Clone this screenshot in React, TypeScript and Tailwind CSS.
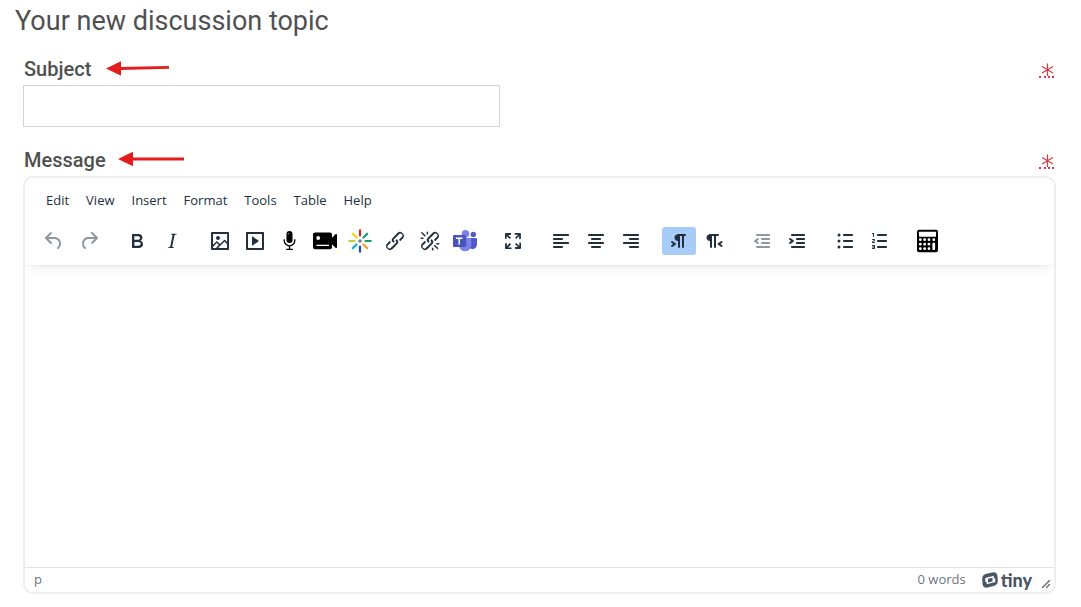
import React from "react";

const paths = {
  undo: "M6.4 8H12c3.7 0 6.2 2 6.8 5.1.6 2.7-.4 5.6-2.3 6.8a1 1 0 0 1-1-1.8c1.1-.6 1.8-2.7 1.4-4.6-.5-2.1-2.1-3.5-4.9-3.5H6.4l3.3 3.3a1 1 0 1 1-1.4 1.4l-5-5a1 1 0 0 1 0-1.4l5-5a1 1 0 0 1 1.4 1.4L6.4 8Z",
  redo: "M17.6 10H12c-2.8 0-4.4 1.4-4.9 3.5-.4 2 .3 4 1.4 4.6a1 1 0 1 1-1 1.8c-2-1.2-2.9-4.1-2.3-6.8.6-3 3-5.1 6.8-5.1h5.6l-3.3-3.3a1 1 0 1 1 1.4-1.4l5 5a1 1 0 0 1 0 1.4l-5 5a1 1 0 0 1-1.4-1.4l3.3-3.3Z",
  bold: "M7.8 19c-.3 0-.5 0-.6-.2l-.2-.5V5.7c0-.2 0-.4.2-.5l.6-.2h5c1.5 0 2.7.3 3.5 1 .7.6 1.1 1.4 1.1 2.5a3 3 0 0 1-.6 1.9c-.4.6-1 1-1.6 1.2.4.1.9.3 1.3.6s.8.7 1 1.2c.4.4.5 1 .5 1.6 0 1.3-.4 2.3-1.3 3-.8.7-2.1 1-3.8 1H7.8Zm5-8.3c.6 0 1.2-.1 1.6-.5.4-.3.6-.7.6-1.3 0-1.1-.8-1.7-2.3-1.7H9.3v3.5h3.4Zm.5 6c.7 0 1.3-.1 1.7-.4.4-.4.6-.9.6-1.5s-.2-1-.7-1.4c-.4-.3-1-.4-2-.4H9.4v3.8h4Z",
  italic: "m16.7 4.7-.1.9h-.3c-.6 0-1 0-1.4.3-.3.3-.4.6-.5 1.1l-2.1 9.8v.6c0 .5.4.8 1.4.8h.2l-.2.8H8l.2-.8h.2c1.1 0 1.8-.5 2-1.5l2-9.8.1-.5c0-.6-.4-.8-1.4-.8h-.3l.2-.9h5.8Z",
  image: "m5 15.7 3.3-3.2c.3-.3.7-.3 1 0L12 15l4.1-4c.3-.4.8-.4 1 0l2 1.9V5H5v10.7ZM5 18V19h3l2.8-2.9-2-2L5 17.9Zm14-3-2.5-2.4-6.4 6.5H19v-4ZM4 3h16c.6 0 1 .4 1 1v16c0 .6-.4 1-1 1H4a1 1 0 0 1-1-1V4c0-.6.4-1 1-1Zm6 8a2 2 0 1 0 0-4 2 2 0 0 0 0 4Z",
  media: "M4 3h16c.6 0 1 .4 1 1v16c0 .6-.4 1-1 1H4a1 1 0 0 1-1-1V4c0-.6.4-1 1-1Zm1 2v14h14V5H5Zm4.8 2.6 5.6 4a.5.5 0 0 1 0 .8l-5.6 4A.5.5 0 0 1 9 16V8a.5.5 0 0 1 .8-.4Z",
  link: "M6.2 12.3a1 1 0 0 1 1.4 1.4l-2 2a2 2 0 1 0 2.6 2.8l4.8-4.8a1 1 0 0 0 0-1.4 1 1 0 1 1 1.4-1.3 2.9 2.9 0 0 1 0 4L9.6 20a3.9 3.9 0 0 1-5.5-5.5l2-2Zm11.6-.6a1 1 0 0 1-1.4-1.4l2-2a2 2 0 1 0-2.6-2.8L11 10.3a1 1 0 0 0 0 1.4A1 1 0 1 1 9.6 13a2.9 2.9 0 0 1 0-4L14.4 4a3.9 3.9 0 0 1 5.5 5.5l-2 2Z",
  unlinkRays: "M7.6 6.3a.8.8 0 0 1-1 1.1L3.3 4.2a.7.7 0 1 1 1-1l3.2 3.1ZM5.1 8.6a.8.8 0 0 1 0 1.5H3a.8.8 0 0 1 0-1.5H5Zm5-3.5a.8.8 0 0 1-1.5 0V3a.8.8 0 0 1 1.5 0V5Zm6 11.8a.8.8 0 0 1 1-1l3.2 3.2a.8.8 0 0 1-1 1L16 17Zm-2.2 2a.8.8 0 0 1 1.5 0V21a.8.8 0 0 1-1.5 0V19Zm5-3.5a.7.7 0 1 1 0-1.5H21a.8.8 0 0 1 0 1.5H19Z",
  fullscreen: "m15.3 10-1.2-1.3 2.9-3h-2.3a.9.9 0 1 1 0-1.7H19c.5 0 .9.4.9.9v4.4a.9.9 0 1 1-1.8 0V7l-2.9 3Zm0 4 3 3v-2.3a.9.9 0 1 1 1.7 0V19c0 .5-.4.9-.9.9h-4.4a.9.9 0 1 1 0-1.8H17l-3-2.9 1.3-1.2ZM10 15.4l-2.9 3h2.3a.9.9 0 1 1 0 1.7H5a.9.9 0 0 1-.9-.9v-4.4a.9.9 0 1 1 1.8 0V17l2.9-3 1.2 1.3ZM8.7 10 5.7 7v2.3a.9.9 0 0 1-1.7 0V5c0-.5.4-.9.9-.9h4.4a.9.9 0 0 1 0 1.8H7l3 2.9-1.3 1.2Z",
  ltr: "M11 5h7a1 1 0 0 1 0 2h-1v11a1 1 0 0 1-2 0V7h-2v11a1 1 0 0 1-2 0v-6c-.5 0-1 0-1.4-.3A3.4 3.4 0 0 1 7.8 10a3.3 3.3 0 0 1 0-2.8 3.4 3.4 0 0 1 1.8-1.8L11 5ZM4.4 16.2 6.2 15l-1.8-1.2a1 1 0 0 1 1.2-1.6l3 2a1 1 0 0 1 0 1.6l-3 2a1 1 0 1 1-1.2-1.6Z",
  rtl: "M8 5h8a1 1 0 0 1 0 2h-2v11a1 1 0 0 1-2 0V7h-2v11a1 1 0 0 1-2 0v-6c-.5 0-1 0-1.4-.3A3.4 3.4 0 0 1 4.8 10a3.3 3.3 0 0 1 0-2.8 3.4 3.4 0 0 1 1.8-1.8L8 5Zm12.2 11.2a1 1 0 1 1-1.2 1.6l-3-2a1 1 0 0 1 0-1.6l3-2a1 1 0 1 1 1.2 1.6L18.4 15l1.8 1.2Z",
  outdentArrow: "M8.6 13.2a1 1 0 0 1-1.2 1.6l-3-2a1 1 0 0 1 0-1.6l3-2a1 1 0 0 1 1.2 1.6L6.8 12l1.8 1.2Z",
  indentArrow: "M4.4 13.2 6.2 12l-1.8-1.2a1 1 0 0 1 1.2-1.6l3 2a1 1 0 0 1 0 1.6l-3 2a1 1 0 1 1-1.2-1.6Z",
  numbers: "M6 4v3.5c0 .3-.2.5-.5.5a.5.5 0 0 1-.5-.5V5h-.5a.5.5 0 0 1 0-1H6Zm-1 8.8.2.2h1.3c.3 0 .5.2.5.5s-.2.5-.5.5H4.9a1 1 0 0 1-.9-1V13c0-.4.3-.8.6-1l1.2-.4.2-.3a.2.2 0 0 0-.2-.2H4.5a.5.5 0 0 1-.5-.5c0-.3.2-.5.5-.5h1.6c.5 0 .9.4.9 1v.1c0 .4-.3.8-.6 1l-1.2.4-.2.3ZM7 17v2c0 .6-.4 1-1 1H4.5a.5.5 0 0 1 0-1h1.2c.2 0 .3-.1.3-.3 0-.2-.1-.3-.3-.3H4.4a.4.4 0 1 1 0-.8h1.3c.2 0 .3-.1.3-.3 0-.2-.1-.3-.3-.3H4.5a.5.5 0 1 1 0-1H6c.6 0 1 .4 1 1Z",
};

function Icon({ children, d }: { children?: React.ReactNode; d?: string }) {
  return (
    <svg width="24" height="24" viewBox="0 0 24 24" fill="currentColor" aria-hidden="true" className="shrink-0">
      {d && <path d={d} />}
      {children}
    </svg>
  );
}

/** Horizontal text bars, each given as [x, y, width]. */
function Bars({ rows }: { rows: [number, number, number][] }) {
  return (
    <>
      {rows.map(([x, y, w]) => (
        <rect key={y} x={x} y={y} width={w} height="2" rx="0.8" />
      ))}
    </>
  );
}

const rayColors = ["#e01e37", "#0f9d78", "#12a15c", "#f39c1f", "#1d4fb0", "#18a7d8", "#b5d334", "#f7d417"];

const Mic = (
  <Icon>
    <rect x="8.5" y="2" width="6" height="12" rx="3" fill="#000" />
    <path d="M10.3 5.2v-.8" stroke="#fff" strokeWidth="1" />
    <path d="M6.2 10.2v1.300a5.300 5.300 0 0 0 10.600 0v-1.300M11.500 17v3M8.200 20.400h6.600" fill="none" stroke="#000" strokeWidth="1.300" />
  </Icon>
);

const Camera = (
  <Icon>
    <path d="M2 3.500h15c1.100 0 2 .9 2 2v3.200l3.400-3.400c.6-.6 1.600-.2 1.600.7v12c0 .9-1 1.300-1.600.7L19 15.300v2.900c0 1.100-.9 2-2 2H2c-1.100 0-2-.9-2-2V5.500c0-1.100.9-2 2-2Z" fill="#000" />
    <circle cx="5.2" cy="9" r="1.900" fill="#fff" />
    <path d="M3.500 16.300h12.500" stroke="#fff" strokeWidth="1.300" />
  </Icon>
);

const Burst = (
  <Icon>
    {rayColors.map((color, i) => (
      <path
        key={color}
        d={i % 2 ? "M12 1.800v5.300" : "M12 1.300v5.200"}
        stroke={color}
        strokeWidth="2.200"
        strokeLinecap="round"
        transform={`rotate(${i * 45} 12 12)`}
      />
    ))}
    <circle cx="12" cy="12" r="1.700" fill="#777" />
  </Icon>
);

const Teams = (
  <Icon>
    <circle cx="20.300" cy="5.400" r="2.700" fill="#5059c9" />
    <path d="M16 9h7.200c.5 0 .8.4.8.9v5.600a4.500 4.500 0 0 1-7 3.700Z" fill="#5059c9" />
    <circle cx="12.500" cy="4.700" r="3.800" fill="#7b83eb" />
    <path d="M7 9h10.300c.6 0 1 .4 1 1v6.800a6.200 6.200 0 0 1-12.300 0V10c0-.6.4-1 1-1Z" fill="#7b83eb" />
    <path d="M8 7h5.500v10.500H6.500V9Z" fill="#4048a5" opacity=".5" />
    <rect x="0" y="6" width="12.500" height="12" rx="1" fill="#4b53bc" />
    <path d="M3 9.200h6.500M6.250 9.200v6.300" stroke="#fff" strokeWidth="1.500" />
  </Icon>
);

const keyRows = [9.2, 13.7, 18.2];
const keyColumns = [3, 7.3, 11.6, 16.4];

const Calculator = (
  <Icon>
    <rect x="1" y=".7" width="21" height="22.600" rx="2" fill="#000" />
    <rect x="3" y="2.700" width="17" height="5" rx=".6" fill="#fff" />
    {keyRows.map((y, row) =>
      keyColumns.map((x, column) =>
        column === 3 && row > 0 ? null : <rect key={`${x}-${y}`} x={x} y={y} width="2.700" height="2.700" rx="1.200" fill="#fff" />,
      ),
    )}
    <rect x="16.400" y="13.700" width="2.700" height="7.200" rx="1" fill="#fff" />
  </Icon>
);

type Tool = { label: string; icon: React.ReactNode; active?: boolean; disabled?: boolean };

const groups: Tool[][] = [
  [
    { label: "Undo", icon: <Icon d={paths.undo} />, disabled: true },
    { label: "Redo", icon: <Icon d={paths.redo} />, disabled: true },
  ],
  [
    { label: "Bold", icon: <Icon d={paths.bold} /> },
    { label: "Italic", icon: <Icon d={paths.italic} /> },
  ],
  [
    { label: "Image", icon: <Icon d={paths.image} /> },
    { label: "Multimedia", icon: <Icon d={paths.media} /> },
    { label: "Record audio", icon: Mic },
    { label: "Record video", icon: Camera },
    { label: "Embed media", icon: Burst },
    { label: "Link", icon: <Icon d={paths.link} /> },
    { label: "Unlink", icon: <Icon d={paths.link + paths.unlinkRays} /> },
    { label: "Teams meeting", icon: Teams },
  ],
  [{ label: "Fullscreen", icon: <Icon d={paths.fullscreen} /> }],
  [
    { label: "Align left", icon: <Icon><Bars rows={[[4, 5, 16], [4, 9, 10], [4, 13, 16], [4, 17, 10]]} /></Icon> },
    { label: "Align center", icon: <Icon><Bars rows={[[4, 5, 16], [7, 9, 10], [4, 13, 16], [7, 17, 10]]} /></Icon> },
    { label: "Align right", icon: <Icon><Bars rows={[[4, 5, 16], [10, 9, 10], [4, 13, 16], [10, 17, 10]]} /></Icon> },
  ],
  [
    { label: "Left to right", icon: <Icon d={paths.ltr} />, active: true },
    { label: "Right to left", icon: <Icon d={paths.rtl} /> },
  ],
  [
    {
      label: "Decrease indent",
      icon: <Icon d={paths.outdentArrow}><Bars rows={[[6, 5, 14], [11, 9, 9], [11, 13, 9], [6, 17, 14]]} /></Icon>,
      disabled: true,
    },
    {
      label: "Increase indent",
      icon: <Icon d={paths.indentArrow}><Bars rows={[[6, 5, 14], [11, 9, 9], [11, 13, 9], [6, 17, 14]]} /></Icon>,
    },
  ],
  [
    {
      label: "Bullet list",
      icon: (
        <Icon>
          <Bars rows={[[10, 5, 10], [10, 11, 10], [10, 17, 10]]} />
          <circle cx="6" cy="6" r="1.500" />
          <circle cx="6" cy="12" r="1.500" />
          <circle cx="6" cy="18" r="1.500" />
        </Icon>
      ),
    },
    { label: "Numbered list", icon: <Icon d={paths.numbers}><Bars rows={[[9, 5, 10], [9, 11, 10], [9, 17, 10]]} /></Icon> },
  ],
  [{ label: "Equation editor", icon: Calculator }],
];

function Arrow({ tilt = false }: { tilt?: boolean }) {
  return (
    <svg width="66" height="16" viewBox="0 0 66 16" aria-hidden="true">
      <path d={tilt ? "M14 7.500 63 6.300" : "M14 7H66"} stroke="#e61c1c" strokeWidth="2.800" />
      <path d={tilt ? "M0 7.500 15 .2v14.600Z" : "M0 7 15-.3v14.600Z"} fill="#e61c1c" />
    </svg>
  );
}

function Required() {
  return (
    <span
      role="img"
      aria-label="Required"
      className="flex h-[15px] w-[15px] items-start justify-end border-b-2 border-dotted border-[#e0364c]"
    >
      <svg width="13" height="13" viewBox="0 0 13 13" aria-hidden="true">
        <path d="M6.500 .5v12.500M1 3.500l11 6.400M12 3.500 1 9.900" stroke="#dc3545" strokeWidth="1.200" fill="none" />
      </svg>
    </span>
  );
}

function TinyLogo() {
  return (
    <a href="#tiny" className="flex items-center gap-[3px] text-[#4a5565]">
      <svg width="16" height="16" viewBox="0 0 16 16" aria-hidden="true">
        <path
          fill="currentColor"
          d="M4.300 1.700 10.500.4c2.800-.6 4.700.8 4.900 3.300l.4 4.600c.2 3-1.300 5.100-4.100 5.800l-6.100 1.500C2.800 16.200.9 15 .6 12.300L.2 7.600C0 4.500 1.400 2.400 4.300 1.700Z"
        />
        <path
          fill="none"
          stroke="#fff"
          strokeWidth="1.400"
          strokeLinejoin="round"
          d="m5.300 6.200 5.900-1.500v5.200l-5.900 1.500ZM5.300 6.200 3.900 6.600v3.200M11.200 9.900l1.300-.4V6.300"
        />
      </svg>
      <span className="font-['Lato',sans-serif] text-[18px] leading-5 font-black">tiny</span>
    </a>
  );
}

export default function App() {
  return (
    <main className="bg-white pb-3 font-['Roboto',sans-serif] text-[#505050]">
      <h1 className="px-[15px] pt-[5px] text-[27px] leading-8">Your new discussion topic</h1>

      <form className="pr-[25px] pl-[23px]">
        <div className="mt-5 flex h-7 items-start justify-between pr-[2px] pl-px">
          <div className="flex items-center gap-[15px]">
            <label htmlFor="subject" className="text-xl leading-6 font-medium">Subject</label>
            <Arrow tilt />
          </div>
          <div className="pt-1.5"><Required /></div>
        </div>
        <input
          id="subject"
          type="text"
          className="block h-[42px] w-full max-w-[477px] border border-[#ced4da] px-3 text-base outline-none"
        />

        <div className="mt-[21px] flex h-7 items-start justify-between pr-[2px] pl-px">
          <div className="flex items-center gap-3">
            <label htmlFor="message" className="text-xl leading-6 font-medium">Message</label>
            <Arrow />
          </div>
          <div className="pt-1.5"><Required /></div>
        </div>

        <section className="overflow-hidden rounded-[10px] border-2 border-[#eee] font-['Open_Sans',sans-serif]">
          <div className="shadow-[0_2px_2px_-2px_rgba(34,47,62,0.1),0_8px_8px_-4px_rgba(34,47,62,0.07)]">
            <nav aria-label="Editor menu" className="flex h-11 items-center gap-[17px] px-[21px] text-[13px] text-[#222f3e]">
              {["Edit", "View", "Insert", "Format", "Tools", "Table", "Help"].map((name) => (
                <button key={name} type="button" className="leading-5">{name}</button>
              ))}
            </nav>
            <div role="toolbar" aria-label="Formatting" className="flex flex-wrap items-center gap-x-[14px] px-3 pt-[5px] pb-[10px]">
              {groups.map((group) => (
                <div key={group[0].label} className="flex gap-px">
                  {group.map((tool) => (
                    <button
                      key={tool.label}
                      type="button"
                      aria-label={tool.label}
                      aria-pressed={tool.active}
                      disabled={tool.disabled}
                      className={`flex h-7 w-[34px] items-center justify-center rounded-[3px] text-[#222f3e] disabled:text-[#222f3e]/50 ${tool.active ? "bg-[#a6ccf7]" : ""}`}
                    >
                      {tool.icon}
                    </button>
                  ))}
                </div>
              ))}
            </div>
          </div>
          <textarea id="message" className="block h-[302px] w-full resize-none p-4 text-base outline-none" />
          <footer className="flex h-[25px] items-center border-t border-[#e3e3e3] pr-[3px] pl-[9px] text-[13px] text-[#222f3e]/70">
            <span className="flex-1">p</span>
            <span className="mr-4">0 words</span>
            <TinyLogo />
            <svg width="10" height="10" viewBox="0 0 10 10" fill="currentColor" aria-hidden="true" className="mt-2 ml-[9px]">
              <path d="M8.100 1.100A.5.500 0 1 1 9 2l-7 7A.5.500 0 1 1 1 8l7-7ZM8.100 5.100A.5.500 0 1 1 9 6l-3 3A.5.500 0 1 1 5 8l3-3Z" />
            </svg>
          </footer>
        </section>
      </form>
    </main>
  );
}
